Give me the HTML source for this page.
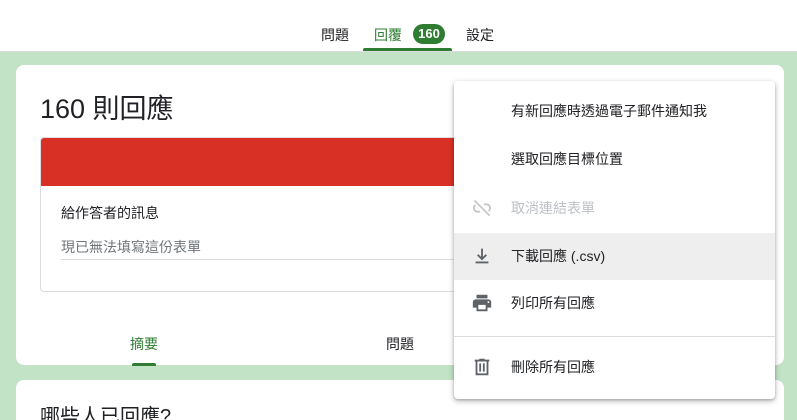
<!DOCTYPE html>
<html><head><meta charset="utf-8"><style>
*{margin:0;padding:0;box-sizing:border-box}
html,body{width:797px;height:420px;overflow:hidden}
body{background:#c2e3c6;font-family:"Liberation Sans","Noto Sans CJK TC",sans-serif;position:relative;color:#202124}
.top{position:absolute;left:0;top:0;width:797px;height:52px;background:#fff;border-bottom:1px solid #dadce0}
.tab{position:absolute;top:25px;font-size:14px}
.badge{position:absolute;left:413px;top:24px;width:32px;height:20px;border-radius:10px;background:#2e7d32;color:#fff;font-size:13px;font-weight:bold;text-align:center;line-height:20px}
.card{position:absolute;left:16px;width:768px;background:#fff;border-radius:8px}
.menu{position:absolute;left:454px;top:81px;width:321px;height:318px;background:#fff;border-radius:4px;box-shadow:0 2px 6px rgba(0,0,0,.3),0 1px 2px rgba(0,0,0,.15)}
.it{position:absolute;left:0;width:321px;height:47px;font-size:14px;line-height:47px;padding-left:57px;color:#202124}
.it svg{position:absolute;left:17px;top:12px}
</style></head><body>
<div class="top">
<span class="tab" style="left:321px;color:#202124">問題</span>
<span class="tab" style="left:374px;color:#2e7d32">回覆</span>
<div class="badge">160</div>
<span class="tab" style="left:466px;color:#202124">設定</span>
<div style="position:absolute;left:363px;top:48px;width:89px;height:3px;background:#2e7d32;border-radius:2px 2px 0 0"></div>
</div>
<div class="card" style="top:65px;height:300px">
<div style="position:absolute;left:24px;top:22px;font-size:27px">160 則回應</div>
<div style="position:absolute;left:24px;top:72px;width:720px;height:155px;border:1px solid #dadce0;border-radius:4px;overflow:hidden">
<div style="height:48px;background:#d93025"></div>
<div style="position:absolute;left:20px;top:65px;font-size:14px">給作答者的訊息</div>
<div style="position:absolute;left:20px;top:99px;font-size:14px;color:#70757a">現已無法填寫這份表單</div>
<div style="position:absolute;left:20px;top:121px;width:700px;height:1px;background:#dadce0"></div>
</div>
<div style="position:absolute;left:114px;top:269px;font-size:14px;color:#2e7d32">摘要</div>
<div style="position:absolute;left:116px;top:298px;width:24px;height:3px;background:#2e7d32;border-radius:2px 2px 0 0"></div>
<div style="position:absolute;left:370px;top:269px;font-size:14px">問題</div>
</div>
<div class="card" style="top:380px;height:60px">
<div style="position:absolute;left:24px;top:20px;font-size:20px">哪些人已回應?</div>
</div>
<div class="menu">
<div class="it" style="top:7px">有新回應時透過電子郵件通知我</div>
<div class="it" style="top:55px">選取回應目標位置</div>
<div class="it" style="top:104px;color:#bdc1c6"><svg width="22" height="22" viewBox="0 0 24 24"><path d="M17 7h-3v2h3a3 3 0 0 1 1.4 5.6l1.4 1.4A5 5 0 0 0 17 7zM7 17h3v-2H7a3 3 0 0 1-1.4-5.6L4.2 8A5 5 0 0 0 7 17zM3 4.3 4.3 3 21 19.7 19.7 21z" fill="#c4c7ca"/></svg>取消連結表單</div>
<div class="it" style="top:152px;background:#eeeeee"><svg width="22" height="22" viewBox="0 0 24 24"><path d="M5 18h14v2H5zM11 4h2v9l3-3 1.4 1.4L12 16.8 6.6 11.4 8 10l3 3z" fill="#5f6368"/></svg>下載回應 (.csv)</div>
<div class="it" style="top:199px"><svg width="22" height="22" viewBox="0 0 24 24"><path d="M19 8H5a3 3 0 0 0-3 3v6h4v4h12v-4h4v-6a3 3 0 0 0-3-3zm-3 11H8v-5h8zm3-7a1 1 0 1 1 0-2 1 1 0 0 1 0 2zM18 3H6v4h12z" fill="#5f6368"/></svg>列印所有回應</div>
<div style="position:absolute;left:0;top:255px;width:321px;height:1px;background:#dadce0"></div>
<div class="it" style="top:263px"><svg width="22" height="22" viewBox="0 0 24 24"><path d="M15 4V3H9v1H4v2h1v15h14V6h1V4zm2 15H7V6h10zM9 8h2v9H9zm4 0h2v9h-2z" fill="#5f6368"/></svg>刪除所有回應</div>
</div>
</body></html>
